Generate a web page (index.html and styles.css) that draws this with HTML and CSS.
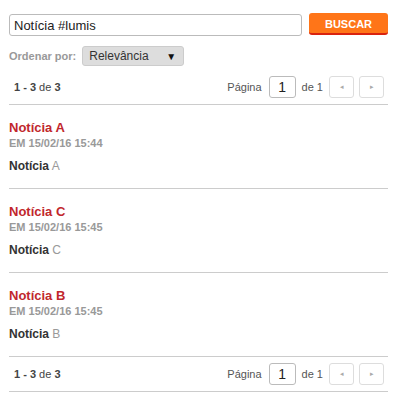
FILE: index.html
```html
<!DOCTYPE html>
<html lang="pt">
<head>
  <meta charset="UTF-8">
  <title>Busca</title>
  <link rel="stylesheet" href="styles.css">
</head>
<body>
  <div class="busca">

    <form class="busca-form">
      <input type="text" class="busca-campo" value="Notícia #lumis">
      <button type="button" class="busca-botao">BUSCAR</button>
    </form>

    <div class="ordem">
      <span class="ordem-label">Ordenar por:</span>
      <div class="ordem-select">Relevância <span class="seta">&#9660;</span></div>
    </div>

    <div class="pager">
      <div class="pager-total"><b>1 - 3</b> de <b>3</b></div>
      <div class="pager-nav">
        <span>Página</span>
        <div class="pager-pag">1</div>
        <span>de 1</span>
        <div class="pager-btn">&#9666;</div>
        <div class="pager-btn">&#9656;</div>
      </div>
    </div>

    <!-- resultados -->
    <div class="item">
      <div class="item-titulo">Notícia A</div>
      <div class="item-data">EM 15/02/16 15:44</div>
      <div class="item-texto"><b>Notícia</b> A</div>
    </div>
    <div class="item">
      <div class="item-titulo">Notícia C</div>
      <div class="item-data">EM 15/02/16 15:45</div>
      <div class="item-texto"><b>Notícia</b> C</div>
    </div>
    <div class="item">
      <div class="item-titulo">Notícia B</div>
      <div class="item-data">EM 15/02/16 15:45</div>
      <div class="item-texto"><b>Notícia</b> B</div>
    </div>

    <div class="pager">
      <div class="pager-total"><b>1 - 3</b> de <b>3</b></div>
      <div class="pager-nav">
        <span>Página</span>
        <div class="pager-pag">1</div>
        <span>de 1</span>
        <div class="pager-btn">&#9666;</div>
        <div class="pager-btn">&#9656;</div>
      </div>
    </div>

  </div>
</body>
</html>
```

FILE: styles.css
```css
/* ---------- Base ---------- */
*{box-sizing:border-box;margin:0;padding:0;}

body{
  font-family:'Liberation Sans',Arial,sans-serif;
  background:#fff;
  color:#333;
}

.busca{
  padding:13px 8px 0 9px;
}

/* ---------- Formulário ---------- */
.busca-form{
  display:flex;
  gap:7px;
  align-items:flex-start;
}

.busca-campo{
  flex:1;
  height:22px;
  margin-top:1px;
  padding:0 4px;
  font-family:'Liberation Sans',Arial,sans-serif;
  font-size:13px;
  color:#222;
  border:1px solid #bbb;
  border-radius:3px;
  outline:none;
}

.busca-botao{
  width:79px;
  height:22px;
  font-family:'Liberation Sans',Arial,sans-serif;
  font-size:11px;
  font-weight:bold;
  color:#fff;
  background:#ff7518;
  border:none;
  border-bottom:2px solid #d9230f;
  border-radius:3px;
  padding-top:2px;
}

/* ---------- Ordenação ---------- */
.ordem{
  display:flex;
  align-items:center;
  gap:6px;
  margin-top:10px;
}

.ordem-label{
  font-size:11px;
  font-weight:bold;
  color:#999;
}

.ordem-select{
  display:flex;
  justify-content:space-between;
  align-items:center;
  width:102px;
  height:20px;
  padding:0 7px 0 6px;
  font-size:12px;
  color:#333;
  background:#ddd;
  border:1px solid #ccc;
  border-radius:3px;
}

.seta{font-size:10px;color:#111;}

/* ---------- Paginação ---------- */
.pager{
  display:flex;
  justify-content:space-between;
  align-items:center;
  padding:6px 4px 6px 5px;
  border-bottom:1px solid #ccc;
}

.ordem + .pager{padding-top:10px;}

.pager-total{font-size:11px;color:#444;}

.pager-nav{
  display:flex;
  align-items:center;
  font-size:11px;
  color:#555;
}

.pager-pag{
  width:27px;
  height:22px;
  margin:0 6px 0 7px;
  border:1px solid #bbb;
  border-radius:3px;
  font-size:14px;
  color:#222;
  text-align:center;
  line-height:20px;
}

.pager-btn{
  width:25px;
  height:22px;
  margin-left:5px;
  border:1px solid #ddd;
  border-radius:3px;
  font-size:7px;
  color:#aaa;
  text-align:center;
  line-height:20px;
}

.pager-nav span + .pager-btn{margin-left:6px;}

/* ---------- Resultados ---------- */
.item{
  padding:15px 0 14px;
  border-bottom:1px solid #ccc;
}

.item-titulo{
  font-size:13px;
  line-height:16px;
  font-weight:bold;
  color:#c1272d;
}

.item-data{
  font-size:11px;
  line-height:14px;
  font-weight:bold;
  color:#999;
}

.item-texto{
  margin-top:8px;
  font-size:12px;
  line-height:16px;
  color:#999;
}

.item-texto b{color:#333;}
```
